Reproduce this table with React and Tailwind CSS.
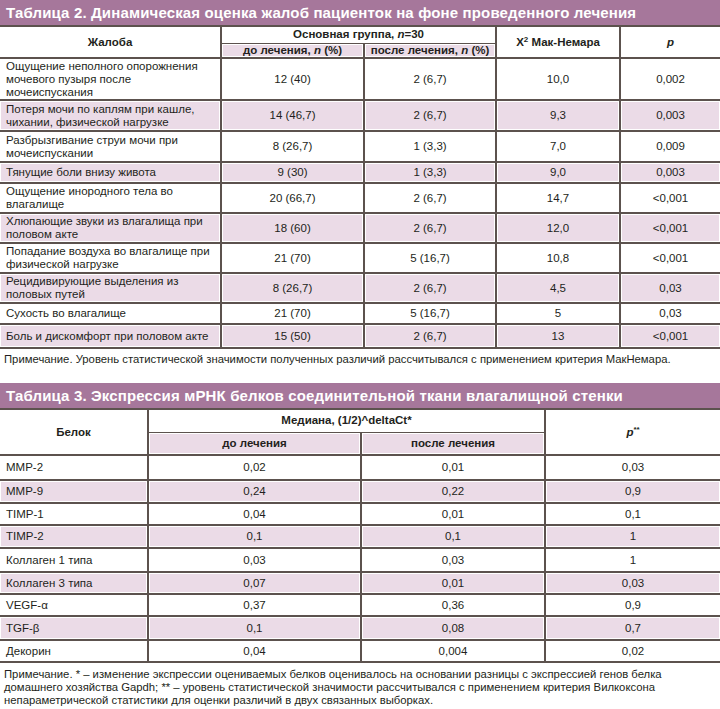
import React from "react";

const line = "border-[#5c524e]";

const complaints = [
  { name: "Ощущение неполного опорожнения мочевого пузыря после мочеиспускания", before: "12 (40)", after: "2 (6,7)", chi: "10,0", p: "0,002", h: "h-[42px]" },
  { name: "Потеря мочи по каплям при кашле, чихании, физической нагрузке", before: "14 (46,7)", after: "2 (6,7)", chi: "9,3", p: "0,003", h: "h-[31px]" },
  { name: "Разбрызгивание струи мочи при мочеиспускании", before: "8 (26,7)", after: "1 (3,3)", chi: "7,0", p: "0,009", h: "h-[31px]" },
  { name: "Тянущие боли внизу живота", before: "9 (30)", after: "1 (3,3)", chi: "9,0", p: "0,003", h: "h-[21px]" },
  { name: "Ощущение инородного тела во влагалище", before: "20 (66,7)", after: "2 (6,7)", chi: "14,7", p: "<0,001", h: "h-[30px]" },
  { name: "Хлюпающие звуки из влагалища при половом акте", before: "18 (60)", after: "2 (6,7)", chi: "12,0", p: "<0,001", h: "h-[30px]" },
  { name: "Попадание воздуха во влагалище при физической нагрузке", before: "21 (70)", after: "5 (16,7)", chi: "10,8", p: "<0,001", h: "h-[30px]" },
  { name: "Рецидивирующие выделения из половых путей", before: "8 (26,7)", after: "2 (6,7)", chi: "4,5", p: "0,03", h: "h-[30px]" },
  { name: "Сухость во влагалище", before: "21 (70)", after: "5 (16,7)", chi: "5", p: "0,03", h: "h-[21px]" },
  { name: "Боль и дискомфорт при половом акте", before: "15 (50)", after: "2 (6,7)", chi: "13", p: "<0,001", h: "h-[24px]" },
];

const proteins = [
  { name: "MMP-2", before: "0,02", after: "0,01", p: "0,03", h: "h-[25px]" },
  { name: "MMP-9", before: "0,24", after: "0,22", p: "0,9", h: "h-[23px]" },
  { name: "TIMP-1", before: "0,04", after: "0,01", p: "0,1", h: "h-[22px]" },
  { name: "TIMP-2", before: "0,1", after: "0,1", p: "1", h: "h-[23px]" },
  { name: "Коллаген 1 типа", before: "0,03", after: "0,03", p: "1", h: "h-[24px]" },
  { name: "Коллаген 3 типа", before: "0,07", after: "0,01", p: "0,03", h: "h-[22px]" },
  { name: "VEGF-α", before: "0,37", after: "0,36", p: "0,9", h: "h-[22px]" },
  { name: "TGF-β", before: "0,1", after: "0,08", p: "0,7", h: "h-[24px]" },
  { name: "Декорин", before: "0,04", after: "0,004", p: "0,02", h: "h-[22px]" },
];

const pink = "bg-[#ebdbe7] shadow-[inset_0_0_0_1px_#ffffff]";

const Title = ({ children }) => (
  <div className={`h-[27px] bg-[#a6779b] border-b-2 ${line} flex items-center px-[6px] text-white font-bold text-[15px] leading-none tracking-[0.15px]`}>
    {children}
  </div>
);

const App = () => {
  return (
    <div className="w-[720px] bg-white text-[#231f20] font-['Liberation_Sans',Arial,sans-serif] text-[11.5px] leading-[13px]">
      <Title>Таблица 2. Динамическая оценка жалоб пациенток на фоне проведенного лечения</Title>
      <table className={`w-full border-collapse table-fixed border-b-2 ${line}`}>
        <colgroup>
          <col className="w-[221px]" />
          <col className="w-[143px]" />
          <col className="w-[132px]" />
          <col className="w-[124px]" />
          <col className="w-[100px]" />
        </colgroup>
        <thead>
          <tr className="h-[16px]">
            <th rowSpan={2} className={`border-r-2 border-b-2 ${line} font-bold text-center`}>Жалоба</th>
            <th colSpan={2} className={`border-r-2 border-b ${line} font-bold text-center`}>
              Основная группа, <i>n</i>=30
            </th>
            <th rowSpan={2} className={`border-r-2 border-b-2 ${line} font-bold text-center`}>
              Х<sup className="text-[8px]">2</sup> Мак-Немара
            </th>
            <th rowSpan={2} className={`border-b-2 ${line} font-bold text-center`}><i>p</i></th>
          </tr>
          <tr className="h-[15px]">
            <th className={`border-r-2 border-b-2 ${line} font-bold text-center ${pink}`}>
              до лечения, <i>n</i> (%)
            </th>
            <th className={`border-r-2 border-b-2 ${line} font-bold text-center ${pink}`}>
              после лечения, <i>n</i> (%)
            </th>
          </tr>
        </thead>
        <tbody>
          {complaints.map((r, i) => {
            const bg = i % 2 === 1 ? pink : "";
            const last = i === complaints.length - 1;
            const b = last ? "" : "border-b-2";
            return (
              <tr key={r.name} className={r.h}>
                <td className={`${b} border-r-2 ${line} ${bg} pl-[6px] pr-[1px] text-left align-middle`}>{r.name}</td>
                <td className={`${b} border-r-2 ${line} ${bg} text-center`}>{r.before}</td>
                <td className={`${b} border-r-2 ${line} ${bg} text-center`}>{r.after}</td>
                <td className={`${b} border-r-2 ${line} ${bg} text-center`}>{r.chi}</td>
                <td className={`${b} ${line} ${bg} text-center`}>{r.p}</td>
              </tr>
            );
          })}
        </tbody>
      </table>
      <p className="px-[4px] pt-[3px] text-[11.3px] leading-[14px]">
        Примечание. Уровень статистической значимости полученных различий рассчитывался с применением критерия МакНемара.
      </p>

      <div className="h-[17px]" />

      <Title>Таблица 3. Экспрессия мРНК белков соединительной ткани влагалищной стенки</Title>
      <table className={`w-full border-collapse table-fixed border-b-2 ${line}`}>
        <colgroup>
          <col className="w-[148px]" />
          <col className="w-[213px]" />
          <col className="w-[184px]" />
          <col className="w-[175px]" />
        </colgroup>
        <thead>
          <tr className="h-[22px]">
            <th rowSpan={2} className={`border-r-2 border-b-2 ${line} font-bold text-center`}>Белок</th>
            <th colSpan={2} className={`border-r-2 border-b ${line} font-bold text-center`}>
              Медиана, (1/2)^deltaCt*
            </th>
            <th rowSpan={2} className={`border-b-2 ${line} font-bold text-center`}>
              <i>p</i><sup className="text-[8px]">**</sup>
            </th>
          </tr>
          <tr className="h-[23px]">
            <th className={`border-r-2 border-b-2 ${line} font-bold text-center ${pink}`}>до лечения</th>
            <th className={`border-r-2 border-b-2 ${line} font-bold text-center ${pink}`}>после лечения</th>
          </tr>
        </thead>
        <tbody>
          {proteins.map((r, i) => {
            const bg = i % 2 === 1 ? pink : "";
            const last = i === proteins.length - 1;
            const b = last ? "" : "border-b-2";
            return (
              <tr key={r.name} className={r.h}>
                <td className={`${b} border-r-2 ${line} ${bg} px-[6px] text-left`}>{r.name}</td>
                <td className={`${b} border-r-2 ${line} ${bg} text-center`}>{r.before}</td>
                <td className={`${b} border-r-2 ${line} ${bg} text-center`}>{r.after}</td>
                <td className={`${b} ${line} ${bg} text-center`}>{r.p}</td>
              </tr>
            );
          })}
        </tbody>
      </table>
      <p className="px-[4px] pt-[5px] text-[11.3px] leading-[13px]">
        Примечание. * – изменение экспрессии оцениваемых белков оценивалось на основании разницы с экспрессией генов белка
        домашнего хозяйства Gapdh; ** – уровень статистической значимости рассчитывался с применением критерия Вилкоксона
        непараметрической статистики для оценки различий в двух связанных выборках.
      </p>
    </div>
  );
};

export default App;
